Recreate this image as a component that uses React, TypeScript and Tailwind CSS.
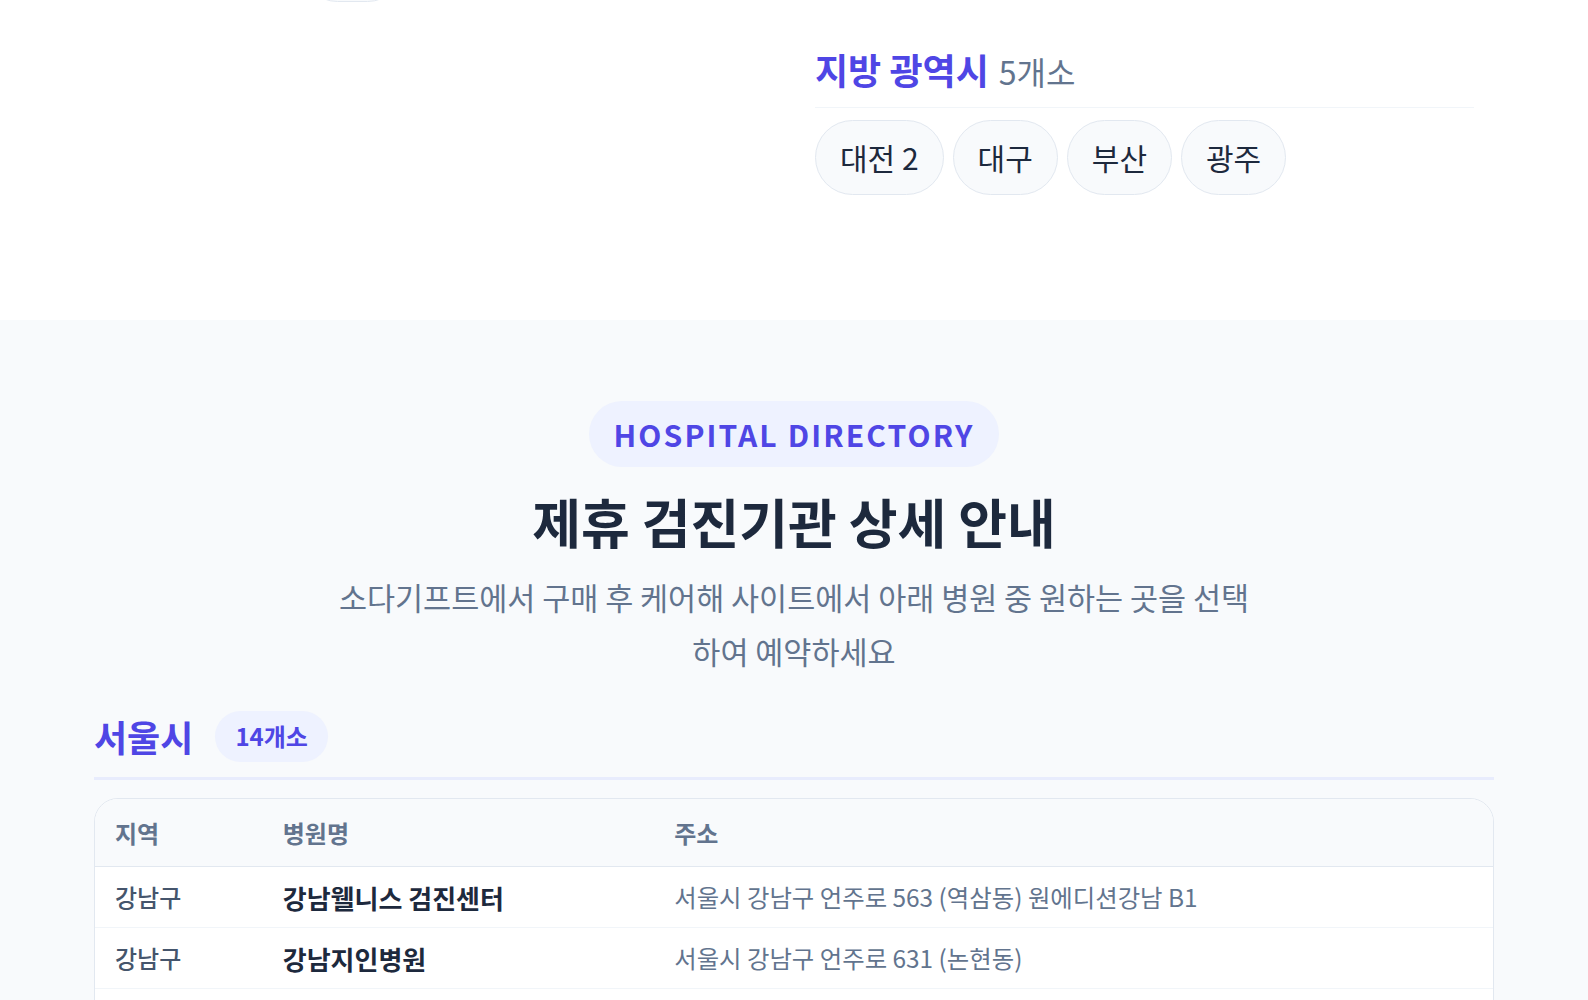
import React from "react";

const font = { fontFamily: '"Noto Sans CJK KR", "Noto Sans", sans-serif' };

const Chip = ({ label }: { label: string }) => (
  <div className="rounded-full border border-slate-200 bg-slate-50 px-6 py-4 text-[30px] leading-[41px] text-slate-800 whitespace-nowrap">
    {label}
  </div>
);

const rows = [
  { region: "강남구", name: "강남웰니스 검진센터", addr: "서울시 강남구 언주로 563 (역삼동) 원에디션강남 B1" },
  { region: "강남구", name: "강남지인병원", addr: "서울시 강남구 언주로 631 (논현동)" },
  { region: "강남구", name: "하나로의료재단 강남센터", addr: "서울시 강남구 테헤란로 411 성담빌딩 2층" },
  { region: "강서구", name: "강서미즈메디병원", addr: "서울시 강서구 공항대로 295 (내발산동)" },
  { region: "구로구", name: "구로성심병원", addr: "서울시 구로구 경인로 427 (고척동)" },
];

export default function App() {
  return (
    <div style={font} className="min-h-screen bg-slate-50">
      <section className="bg-white">
        <div className="mx-auto grid max-w-[1400px] grid-cols-2 items-start gap-[42px] px-5 pb-[125px]">
          <div className="-mt-[73px] flex flex-wrap gap-[10px] pl-[186px]">
            <Chip label="강동" />
          </div>
          <div className="pt-[45px]">
            <div className="flex items-baseline gap-[10px] border-b border-slate-100 pb-[12px] leading-[48px]">
              <span className="text-[36px] font-bold text-[#4f46e5]">지방 광역시</span>
              <span className="text-[32px] text-slate-500">5개소</span>
            </div>
            <div className="mt-[12px] flex flex-wrap gap-[9px]">
              <Chip label="대전 2" />
              <Chip label="대구" />
              <Chip label="부산" />
              <Chip label="광주" />
            </div>
          </div>
        </div>
      </section>

      <section className="bg-slate-50 pt-[81px] pb-20">
        <div className="text-center">
          <div className="inline-block rounded-full bg-indigo-50 px-[25px] py-[12px] text-[30px] font-bold leading-[42px] tracking-[0.07em] text-[#4f46e5]">
            HOSPITAL DIRECTORY
          </div>
          <h2 className="mt-[25px] text-[53px] font-bold leading-[58px] text-slate-800">제휴 검진기관 상세 안내</h2>
          <p className="mx-auto mt-[20px] max-w-[920px] text-[30.5px] leading-[54px] text-slate-500">
            소다기프트에서 구매 후 케어해 사이트에서 아래 병원 중 원하는 곳을 선택하여 예약하세요
          </p>
        </div>

        <div className="mx-auto mt-[31px] max-w-[1400px]">
          <div className="flex items-center gap-[22px] border-b-[3px] border-[#e8ecfd] pb-[14px]">
            <h3 className="text-[36px] font-bold leading-[54px] text-[#4f46e5]">서울시</h3>
            <span className="flex h-[51px] items-center rounded-full bg-indigo-50 px-[20px] text-[24px] font-bold text-[#4f46e5]">
              14개소
            </span>
          </div>

          <div className="mt-[18px] overflow-hidden rounded-3xl border border-slate-200 bg-white">
            <div className="grid h-[68px] grid-cols-[12%_28%_60%] items-center border-b border-slate-200 bg-slate-50 text-[24px] font-bold text-slate-500">
              <div className="px-5">지역</div>
              <div className="px-5">병원명</div>
              <div className="px-5">주소</div>
            </div>
            {rows.map((r, i) => (
              <div
                key={i}
                className="grid h-[61px] grid-cols-[12%_28%_60%] items-center border-b border-slate-100"
              >
                <div className="px-5 text-[24px] font-medium text-slate-600">{r.region}</div>
                <div className="px-5 text-[26px] font-bold text-slate-800">{r.name}</div>
                <div className="px-5 text-[24.4px] text-slate-500">{r.addr}</div>
              </div>
            ))}
          </div>
        </div>
      </section>
    </div>
  );
}
